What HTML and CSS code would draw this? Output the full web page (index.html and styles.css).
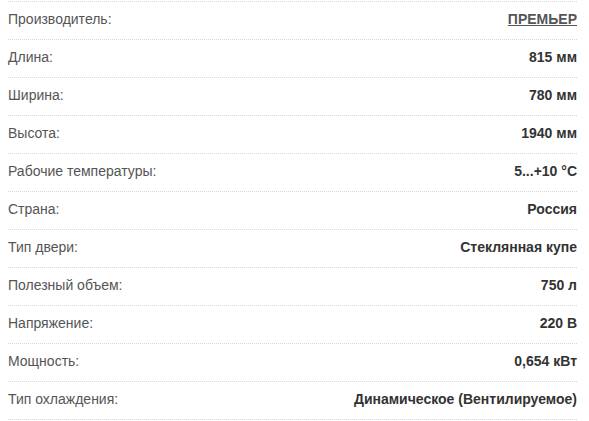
FILE: index.html
```html
<!DOCTYPE html>
<html lang="ru">
<head>
<meta charset="utf-8">
<link rel="stylesheet" href="styles.css">
</head>
<body>
<div class="specs">
  <div class="row"><span class="label">Производитель:</span><a class="value link" href="#">ПРЕМЬЕР</a></div>
  <div class="row"><span class="label">Длина:</span><span class="value">815 мм</span></div>
  <div class="row"><span class="label">Ширина:</span><span class="value">780 мм</span></div>
  <div class="row"><span class="label">Высота:</span><span class="value">1940 мм</span></div>
  <div class="row"><span class="label">Рабочие температуры:</span><span class="value">5...+10 °C</span></div>
  <div class="row"><span class="label">Страна:</span><span class="value">Россия</span></div>
  <div class="row"><span class="label">Тип двери:</span><span class="value">Стеклянная купе</span></div>
  <div class="row"><span class="label">Полезный объем:</span><span class="value">750 л</span></div>
  <div class="row"><span class="label">Напряжение:</span><span class="value">220 В</span></div>
  <div class="row"><span class="label">Мощность:</span><span class="value">0,654 кВт</span></div>
  <div class="row"><span class="label">Тип охлаждения:</span><span class="value">Динамическое (Вентилируемое)</span></div>
</div>
</body>
</html>
```
FILE: styles.css
```css
html, body {
  margin: 0;
  padding: 0;
  background: #fff;
}
body {
  font-family: "Liberation Sans", Arial, sans-serif;
  font-size: 14px;
  line-height: 16px;
}
.specs {
  margin: 1px 12px 0 8px;
  border-bottom: 1px dotted #d6d6d6;
}
.row {
  display: flex;
  justify-content: space-between;
  align-items: flex-start;
  height: 28px;
  padding-top: 9px;
  border-top: 1px dotted #d6d6d6;
}
.label {
  color: #555;
}
.value {
  color: #333;
  font-weight: bold;
}
.link {
  text-decoration: underline;
  color: #555;
}
```
